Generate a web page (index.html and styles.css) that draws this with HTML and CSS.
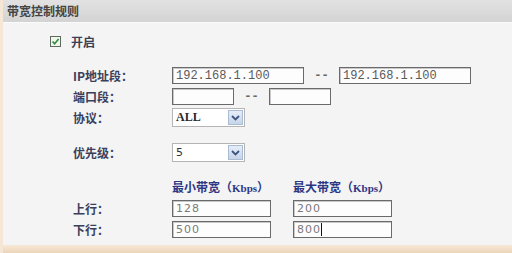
FILE: index.html
```html
<!DOCTYPE html>
<html lang="zh">
<head>
<meta charset="utf-8">
<title>带宽控制规则</title>
<link rel="stylesheet" href="styles.css">
</head>
<body>
<div class="page">
  <div class="header">带宽控制规则</div>
  <div class="rule"></div>
  <div class="main">
    <div class="enable">
      <span class="check"><svg width="9" height="9" viewBox="0 0 9 9"><path d="M1.5 4.5 L3.6 6.8 L7.6 2" fill="none" stroke="#2f8a3a" stroke-width="1.6"/></svg></span>
      <span class="enable-text">开启</span>
    </div>
    <div class="form">
      <div class="row r-ip">
        <span class="label">IP地址段：</span>
        <div class="field ip mono">192.168.1.100</div>
        <span class="dash">--</span>
        <div class="field ip mono">192.168.1.100</div>
      </div>
      <div class="row r-port">
        <span class="label">端口段：</span>
        <div class="field port"></div>
        <span class="dash">--</span>
        <div class="field port"></div>
      </div>
      <div class="row r-proto">
        <span class="label">协议：</span>
        <div class="select"><span class="sel-val serif">ALL</span><span class="arrow"><svg width="9" height="6" viewBox="0 0 9 6"><path d="M1 1 L4.5 4.5 L8 1" fill="none" stroke="#3d557f" stroke-width="1.8"/></svg></span></div>
      </div>
      <div class="row r-prio">
        <span class="label">优先级：</span>
        <div class="select"><span class="sel-val">5</span><span class="arrow"><svg width="9" height="6" viewBox="0 0 9 6"><path d="M1 1 L4.5 4.5 L8 1" fill="none" stroke="#3d557f" stroke-width="1.8"/></svg></span></div>
      </div>
      <div class="row r-head">
        <span class="label"></span>
        <span class="colhead">最小带宽（<span class="kb">Kbps</span>）</span>
        <span class="colhead">最大带宽（<span class="kb">Kbps</span>）</span>
      </div>
      <div class="row r-up">
        <span class="label">上行：</span>
        <div class="field bw">128</div>
        <div class="field bw">200</div>
      </div>
      <div class="row r-down">
        <span class="label">下行：</span>
        <div class="field bw">500</div>
        <div class="field bw">800<span class="caret"></span></div>
      </div>
    </div>
  </div>
  <div class="footer"></div>
</div>
</body>
</html>
```
FILE: styles.css
```css
html, body {
  margin: 0;
  padding: 0;
}
body {
  width: 512px;
  height: 253px;
  overflow: hidden;
  background: #f4f4f4;
  font-family: "Noto Sans CJK SC", "DejaVu Sans", sans-serif;
  font-size: 12px;
}
.page {
  height: 253px;
  display: flex;
  flex-direction: column;
  border-left: 3px solid #f6e6d6;
  box-sizing: border-box;
}
.header {
  height: 22px;
  line-height: 22px;
  padding-left: 4px;
  background: linear-gradient(#e2e2e2, #d3d3d3);
  color: #444;
  font-weight: bold;
  font-size: 12px;
}
.rule {
  height: 1px;
  background: #fbfbfb;
}
.main {
  flex: 1;
  padding-top: 13px;
  box-sizing: border-box;
}
.enable {
  display: flex;
  align-items: center;
  height: 11px;
  padding-left: 47px;
}
.check {
  width: 9px;
  height: 9px;
  border: 1px solid #5d6b5f;
  background: #f0f5ee;
  display: flex;
}
.enable-text {
  margin-left: 10px;
  color: #3a3f58;
  font-weight: bold;
  line-height: 11px;
}
.form {
  margin-top: 20px;
  padding-left: 70px;
}
.row {
  display: flex;
  align-items: center;
}
.label {
  width: 99px;
  flex: none;
  color: #3a3f5c;
  font-weight: bold;
  font-size: 12px;
}
.r-ip { height: 17px; }
.r-port { height: 17px; margin-top: 4px; }
.r-proto { height: 19px; margin-top: 3px; }
.r-prio { height: 19px; margin-top: 16px; }
.r-head { height: 14px; margin-top: 17px; }
.r-up { height: 17px; margin-top: 7px; }
.r-down { height: 17px; margin-top: 4px; }
.field {
  height: 17px;
  box-sizing: border-box;
  border: 1px solid #6a6a6a;
  box-shadow: inset 1px 1px 0 #c8c8c8;
  background: #fdfdfd;
  color: #7a7a7a;
  padding-left: 3px;
  display: flex;
  align-items: center;
  font-family: "DejaVu Sans", sans-serif;
  font-size: 11px;
  letter-spacing: 1px;
}
.mono {
  font-family: "Liberation Mono", monospace;
  font-size: 12px;
  letter-spacing: 0;
  color: #5a5a5a;
}
.ip { width: 132px; }
.port { width: 62px; }
.bw { width: 99px; }
.bw + .bw { margin-left: 22px; }
.dash {
  width: 35px;
  text-align: center;
  color: #666;
  font-family: "Liberation Mono", monospace;
  font-size: 12px;
  font-weight: bold;
}
.caret {
  width: 1px;
  height: 13px;
  background: #111;
}
.select {
  width: 73px;
  height: 19px;
  box-sizing: border-box;
  border: 1px solid #b5b5b5;
  background: #fff;
  display: flex;
  align-items: center;
  justify-content: space-between;
  padding: 1px;
}
.sel-val {
  padding-left: 2px;
  color: #333;
  font-family: "DejaVu Sans", sans-serif;
  font-size: 11px;
}
.serif {
  font-family: "Liberation Serif", serif;
  font-weight: bold;
  font-size: 12px;
  color: #2a2a2a;
}
.arrow {
  width: 15px;
  height: 15px;
  box-sizing: border-box;
  border: 1px solid #aabbd4;
  background: linear-gradient(#e6edf8, #c6d5ea);
  display: flex;
  align-items: center;
  justify-content: center;
}
.colhead {
  width: 121px;
  color: #2e3784;
  font-weight: bold;
  font-size: 12px;
  white-space: nowrap;
}
.kb {
  font-family: "Liberation Serif", serif;
  font-weight: bold;
  font-size: 11px;
}
.footer {
  height: 8px;
  background: linear-gradient(#f7e8d6, #ecd5b9);
}
```
